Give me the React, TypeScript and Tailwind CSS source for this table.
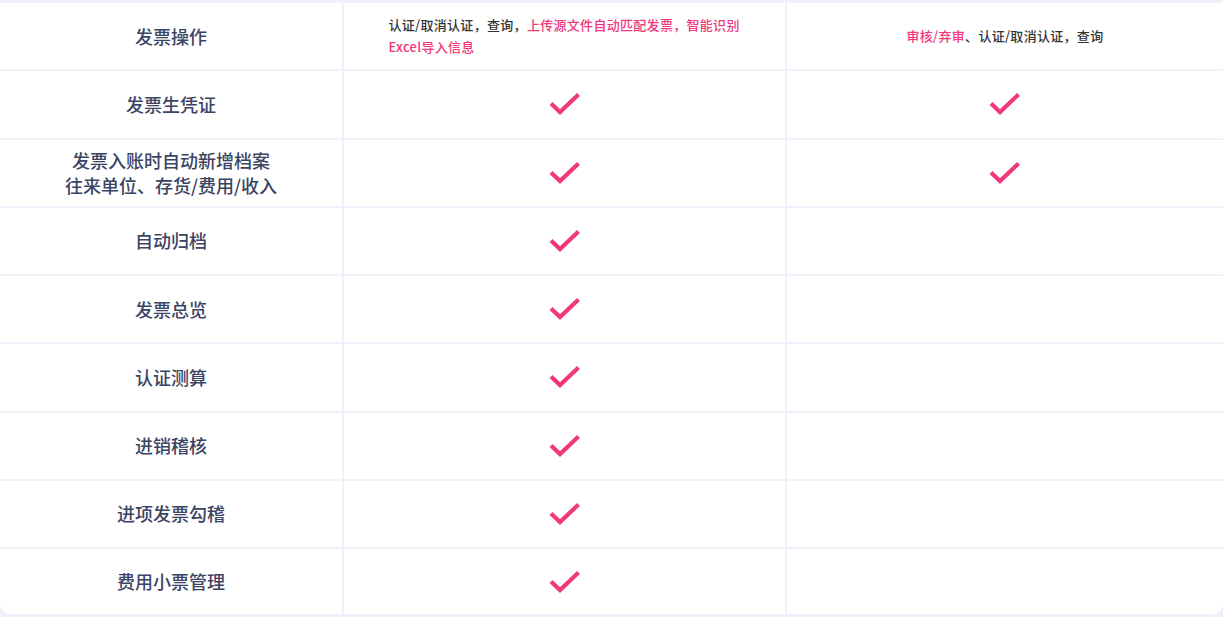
const pink = "text-[#f1387c]";

type Row = {
  name: string[];
  std: "check" | "ops" | null;
  pro: "check" | "ops" | null;
};

const rows: Row[] = [
  { name: ["发票操作"], std: "ops", pro: "ops" },
  { name: ["发票生凭证"], std: "check", pro: "check" },
  { name: ["发票入账时自动新增档案", "往来单位、存货/费用/收入"], std: "check", pro: "check" },
  { name: ["自动归档"], std: "check", pro: null },
  { name: ["发票总览"], std: "check", pro: null },
  { name: ["认证测算"], std: "check", pro: null },
  { name: ["进销稽核"], std: "check", pro: null },
  { name: ["进项发票勾稽"], std: "check", pro: null },
  { name: ["费用小票管理"], std: "check", pro: null },
];

function Check() {
  return (
    <svg width="34" height="26" viewBox="0 0 34 26" fill="none">
      <polyline
        points="3,12.5 12,21 30.5,3.5"
        stroke="#f1387c"
        strokeWidth="4.2"
        strokeLinejoin="miter"
        strokeLinecap="butt"
      />
    </svg>
  );
}

function StdOps() {
  return (
    <div className="w-[352px] mx-auto text-left text-[13px] tracking-[0.3px] leading-[22px] text-[#333] font-medium">
      认证/取消认证，查询，<span className={pink}>上传源文件自动匹配发票，智能识别Excel导入信息</span>
    </div>
  );
}

function ProOps() {
  return (
    <div className="text-[13px] tracking-[0.3px] leading-[22px] text-[#333] font-medium">
      <span className={pink}>审核/弃审</span>、认证/取消认证，查询
    </div>
  );
}

export default function App() {
  return (
    <div
      className="w-[1223px] h-[617px] bg-[#eef1fa] overflow-hidden"
      style={{ fontFamily: '"Noto Sans CJK SC", "Noto Sans", sans-serif' }}
    >
      <div className="bg-white rounded-b-[10px] border-t-2 border-[#eef2fb] mt-px">
        {rows.map((r, i) => (
          <div
            key={i}
            className={
              "grid grid-cols-[344px_443px_1fr] " +
              (i < rows.length - 1 ? "h-[68.25px] border-b-2 border-[#eef2fb]" : "h-[65px]")
            }
          >
            <div className="border-r-2 border-[#eef2fb] flex flex-col items-center justify-center text-[18px] leading-[25px] font-medium text-[#3b4463]">
              {r.name.map((n) => (
                <div key={n}>{n}</div>
              ))}
            </div>
            <div className="border-r-2 border-[#eef2fb] flex items-center justify-center">
              {r.std === "check" && <Check />}
              {r.std === "ops" && <StdOps />}
            </div>
            <div className="flex items-center justify-center">
              {r.pro === "check" && <Check />}
              {r.pro === "ops" && <ProOps />}
            </div>
          </div>
        ))}
      </div>
    </div>
  );
}
